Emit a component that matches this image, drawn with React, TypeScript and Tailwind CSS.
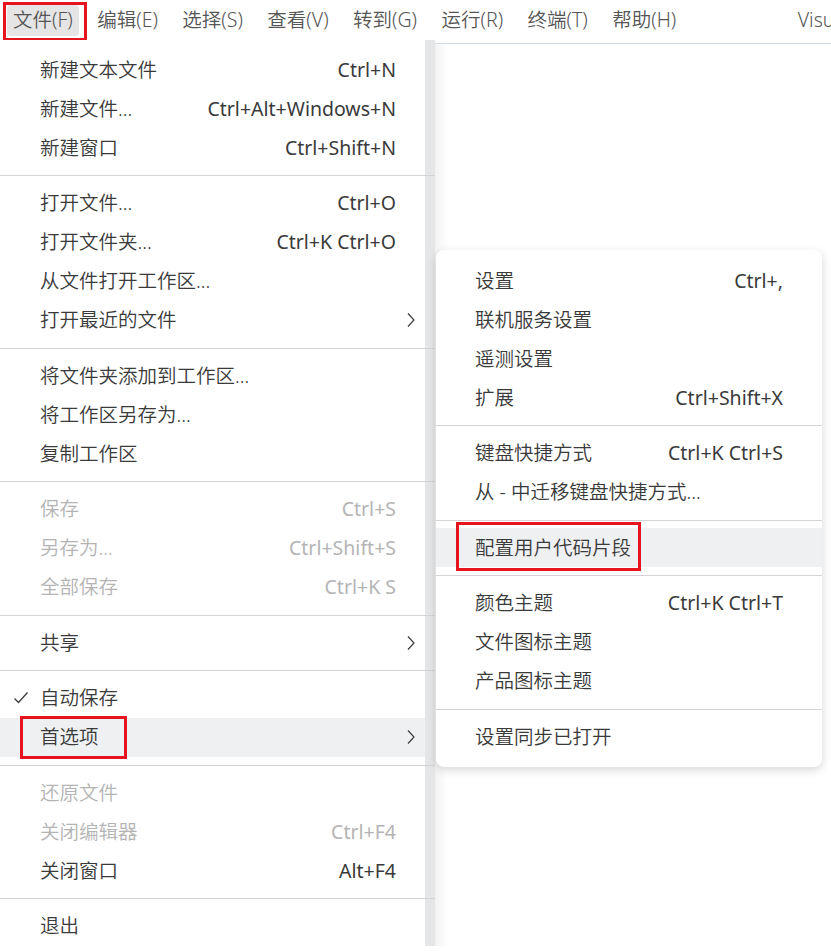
import React from "react";

type Item =
  | { sep: true }
  | {
      sep?: false;
      label: string;
      keys?: string;
      disabled?: boolean;
      sub?: boolean;
      checked?: boolean;
      active?: boolean;
      marked?: boolean;
    };

const fileMenu: Item[] = [
  { label: "新建文本文件", keys: "Ctrl+N" },
  { label: "新建文件...", keys: "Ctrl+Alt+Windows+N" },
  { label: "新建窗口", keys: "Ctrl+Shift+N" },
  { sep: true },
  { label: "打开文件...", keys: "Ctrl+O" },
  { label: "打开文件夹...", keys: "Ctrl+K Ctrl+O" },
  { label: "从文件打开工作区..." },
  { label: "打开最近的文件", sub: true },
  { sep: true },
  { label: "将文件夹添加到工作区..." },
  { label: "将工作区另存为..." },
  { label: "复制工作区" },
  { sep: true },
  { label: "保存", keys: "Ctrl+S", disabled: true },
  { label: "另存为...", keys: "Ctrl+Shift+S", disabled: true },
  { label: "全部保存", keys: "Ctrl+K S", disabled: true },
  { sep: true },
  { label: "共享", sub: true },
  { sep: true },
  { label: "自动保存", checked: true },
  { label: "首选项", sub: true, active: true, marked: true },
  { sep: true },
  { label: "还原文件", disabled: true },
  { label: "关闭编辑器", keys: "Ctrl+F4", disabled: true },
  { label: "关闭窗口", keys: "Alt+F4" },
  { sep: true },
  { label: "退出" },
];

const prefMenu: Item[] = [
  { label: "设置", keys: "Ctrl+," },
  { label: "联机服务设置" },
  { label: "遥测设置" },
  { label: "扩展", keys: "Ctrl+Shift+X" },
  { sep: true },
  { label: "键盘快捷方式", keys: "Ctrl+K Ctrl+S" },
  { label: "从 - 中迁移键盘快捷方式..." },
  { sep: true },
  { label: "配置用户代码片段", active: true, marked: true },
  { sep: true },
  { label: "颜色主题", keys: "Ctrl+K Ctrl+T" },
  { label: "文件图标主题" },
  { label: "产品图标主题" },
  { sep: true },
  { label: "设置同步已打开" },
];

const menubar = ["文件(F)", "编辑(E)", "选择(S)", "查看(V)", "转到(G)", "运行(R)", "终端(T)", "帮助(H)"];

function Check() {
  return (
    <svg width="16" height="14" viewBox="0 0 16 14" fill="none">
      <path d="M1.5 7.5 L5.5 11.5 L14.5 1.5" stroke="#3c3c3c" strokeWidth="1.3" />
    </svg>
  );
}

function Chevron() {
  return (
    <svg width="10" height="16" viewBox="0 0 10 16" fill="none">
      <path d="M2 1.5 L8 8 L2 14.5" stroke="#3c3c3c" strokeWidth="1.2" />
    </svg>
  );
}

function Separator() {
  return (
    <div className="h-[16.5px] pt-[8px]">
      <div className="h-px bg-[#d4d4d4]" />
    </div>
  );
}

function MainRow({ item }: { item: Item }) {
  if (item.sep) return <Separator />;
  return (
    <div
      className={`relative flex h-[39px] w-[425px] items-center ${item.active ? "bg-[#eff0f2]" : ""} ${
        item.disabled ? "text-[#b4b4b4]" : "text-[#3a3a3a]"
      }`}
    >
      <div className="flex w-[40px] justify-center pl-[2px]">{item.checked && <Check />}</div>
      <span className="flex-1 whitespace-nowrap">{item.label}</span>
      {item.keys && <span className="whitespace-nowrap font-normal">{item.keys}</span>}
      <div className="flex w-[29px] justify-center pl-[1px]">{item.sub && <Chevron />}</div>
      {item.marked && (
        <div className="absolute left-[20px] top-[-2px] h-[43px] w-[107px] border-[3px] border-[#e5141f]" />
      )}
    </div>
  );
}

function SubRow({ item }: { item: Item }) {
  if (item.sep) return <Separator />;
  return (
    <div
      className={`relative flex h-[39px] items-center justify-between px-[39px] text-[#3a3a3a] ${
        item.active ? "bg-[#eff0f2]" : ""
      }`}
    >
      <span className="whitespace-nowrap">{item.label}</span>
      {item.keys && <span className="whitespace-nowrap font-normal">{item.keys}</span>}
      {item.marked && (
        <div className="absolute left-[20px] top-[-6px] h-[49px] w-[185px] border-[3px] border-[#e5141f]" />
      )}
    </div>
  );
}

export default function App() {
  return (
    <div className="relative h-[951px] w-[831px] overflow-hidden bg-white font-['Segoe_UI','Noto_Sans','Noto_Sans_CJK_SC',sans-serif] text-[19.5px] font-[350] leading-none">
      {/* menu bar */}
      <div className="flex h-[40px] items-center overflow-hidden whitespace-nowrap pl-[7px]">
        {menubar.map((m, i) => (
          <div
            key={m}
            className={`relative mr-[12.5px] flex h-[31px] items-center rounded-[4px] px-[6px] text-[#555555] ${
              i === 0 ? "bg-[#e5e5e5]" : ""
            }`}
          >
            {m}
            {i === 0 && (
              <div className="absolute left-[-4px] top-[-3px] h-[39px] w-[84px] border-[3px] border-[#e5141f]" />
            )}
          </div>
        ))}
        <span className="ml-[103px] text-[#555555]">Visu</span>
      </div>

      <div className="flex">
        {/* file menu */}
        <div className="w-[435px] bg-[linear-gradient(to_right,#ffffff_425px,#e5e6e8_425px)] pt-[10px]">
          {fileMenu.map((it, i) => (
            <MainRow key={i} item={it} />
          ))}
        </div>

        {/* right side */}
        <div className="mt-[3px] flex-1 border-t border-[#d3d9e1] bg-[linear-gradient(to_right,rgba(0,0,0,0.05),rgba(0,0,0,0)_12px)]">
          <div className="ml-[1px] mr-[9px] mt-[206px] rounded-[8px] bg-white py-[11px] shadow-[0_3px_10px_rgba(0,0,0,0.16)]">
            {prefMenu.map((it, i) => (
              <SubRow key={i} item={it} />
            ))}
          </div>
        </div>
      </div>
    </div>
  );
}
